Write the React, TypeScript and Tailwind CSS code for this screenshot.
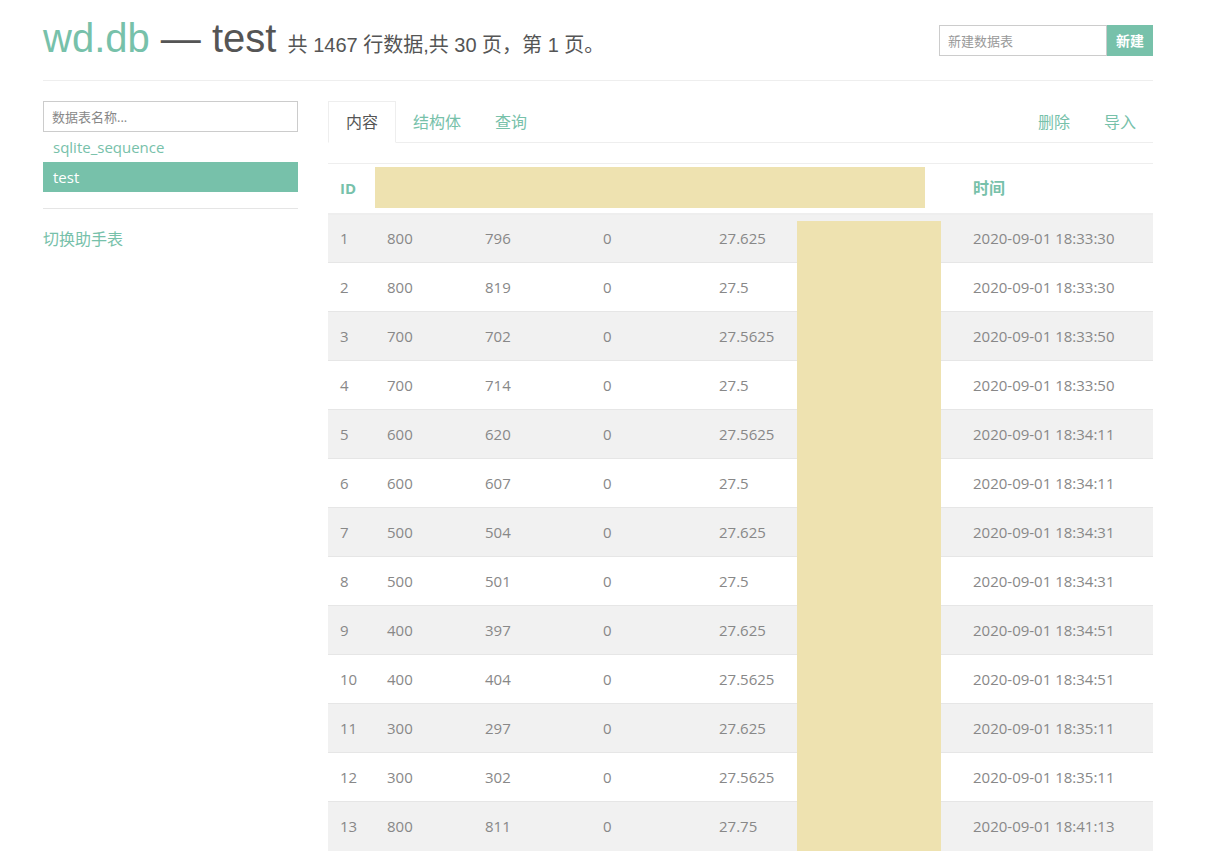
import React from "react";

const rows = [
  ["1", "800", "796", "0", "27.625", "2020-09-01 18:33:30"],
  ["2", "800", "819", "0", "27.5", "2020-09-01 18:33:30"],
  ["3", "700", "702", "0", "27.5625", "2020-09-01 18:33:50"],
  ["4", "700", "714", "0", "27.5", "2020-09-01 18:33:50"],
  ["5", "600", "620", "0", "27.5625", "2020-09-01 18:34:11"],
  ["6", "600", "607", "0", "27.5", "2020-09-01 18:34:11"],
  ["7", "500", "504", "0", "27.625", "2020-09-01 18:34:31"],
  ["8", "500", "501", "0", "27.5", "2020-09-01 18:34:31"],
  ["9", "400", "397", "0", "27.625", "2020-09-01 18:34:51"],
  ["10", "400", "404", "0", "27.5625", "2020-09-01 18:34:51"],
  ["11", "300", "297", "0", "27.625", "2020-09-01 18:35:11"],
  ["12", "300", "302", "0", "27.5625", "2020-09-01 18:35:11"],
  ["13", "800", "811", "0", "27.75", "2020-09-01 18:41:13"],
];

const font = "font-['Open_Sans','Noto_Sans_CJK_SC',sans-serif]";

export default function App() {
  return (
    <div className={`bg-white ${font}`}>
      <div className="ml-[43px] w-[1110px]">
        {/* header */}
        <div className="flex items-start justify-between border-b border-[#eee] pt-[16px] pb-[13px]">
          <h1 className="font-['Liberation_Sans','Noto_Sans_CJK_SC',sans-serif] text-[40px] leading-[44px] text-[#555]">
            <span className="text-[#77c1aa]">wd.db</span> — test{" "}
            <small className="text-[20px] text-[#555]">共 1467 行数据,共 30 页，第 1 页。</small>
          </h1>
          <div className="mt-[9px] flex">
            <input
              placeholder="新建数据表"
              className="h-[31px] w-[168px] border border-[#ccc] px-[8px] text-[13px] text-[#555] placeholder:text-[#999] outline-none"
            />
            <button className="h-[31px] w-[46px] bg-[#77c1aa] text-[14px] font-semibold text-white">新建</button>
          </div>
        </div>

        <div className="mt-[20px] flex gap-[30px]">
          {/* sidebar */}
          <aside className="w-[255px] shrink-0">
            <input
              placeholder="数据表名称..."
              className="h-[31px] w-full border border-[#ccc] px-[8px] text-[13px] placeholder:text-[#888] outline-none"
            />
            <ul className="text-[15px]">
              <li className="flex h-[30px] items-center px-[10px] text-[#77c1aa]">sqlite_sequence</li>
              <li className="flex h-[30px] items-center bg-[#77c1aa] px-[10px] text-white">test</li>
            </ul>
            <hr className="mt-[16px] border-[#e5e5e5]" />
            <div className="mt-[19px] text-[16px] leading-[22px] text-[#77c1aa]">切换助手表</div>
          </aside>

          {/* main */}
          <main className="w-[825px]">
            <div className="flex h-[42px] border-b border-[#eee] text-[16px]">
              <div className="-mb-px flex items-center border border-b-white border-[#eee] bg-white px-[17px] text-[#555]">内容</div>
              <div className="flex items-center px-[17px] text-[#77c1aa]">结构体</div>
              <div className="flex items-center px-[17px] text-[#77c1aa]">查询</div>
              <div className="flex-1" />
              <div className="flex items-center px-[17px] text-[#77c1aa]">删除</div>
              <div className="flex items-center px-[17px] text-[#77c1aa]">导入</div>
            </div>

            <div className="relative mt-[20px]">
              <table className="w-full table-fixed border-collapse border-t border-[#eee] text-[15px]">
                <colgroup>
                  <col className="w-[47px]" />
                  <col className="w-[98px]" />
                  <col className="w-[118px]" />
                  <col className="w-[116px]" />
                  <col className="w-[110px]" />
                  <col className="w-[144px]" />
                  <col className="w-[192px]" />
                </colgroup>
                <thead>
                  <tr className="h-[50px] border-b-2 border-[#eee] text-left text-[#77c1aa]">
                    <th className="px-[12px] font-bold">ID</th>
                    <th colSpan={5}></th>
                    <th className="px-[12px] text-[16px] font-bold">时间</th>
                  </tr>
                </thead>
                <tbody className="text-[#888]">
                  {rows.map((r, i) => (
                    <tr key={r[0]} className={`h-[49px] border-t border-[#e6e6e6] ${i % 2 === 0 ? "bg-[#f1f1f1]" : "bg-white"}`}>
                      <td className="px-[12px]">{r[0]}</td>
                      <td className="px-[12px]">{r[1]}</td>
                      <td className="px-[12px]">{r[2]}</td>
                      <td className="px-[12px]">{r[3]}</td>
                      <td className="px-[12px]">{r[4]}</td>
                      <td></td>
                      <td className="px-[12px]">{r[5]}</td>
                    </tr>
                  ))}
                </tbody>
              </table>
              {/* redaction overlays */}
              <div className="absolute left-[47px] top-[4px] h-[41px] w-[550px] bg-[#eee2b0]" />
              <div className="absolute left-[469px] top-[58px] bottom-0 w-[144px] bg-[#eee2b0]" />
            </div>
          </main>
        </div>
      </div>
    </div>
  );
}
